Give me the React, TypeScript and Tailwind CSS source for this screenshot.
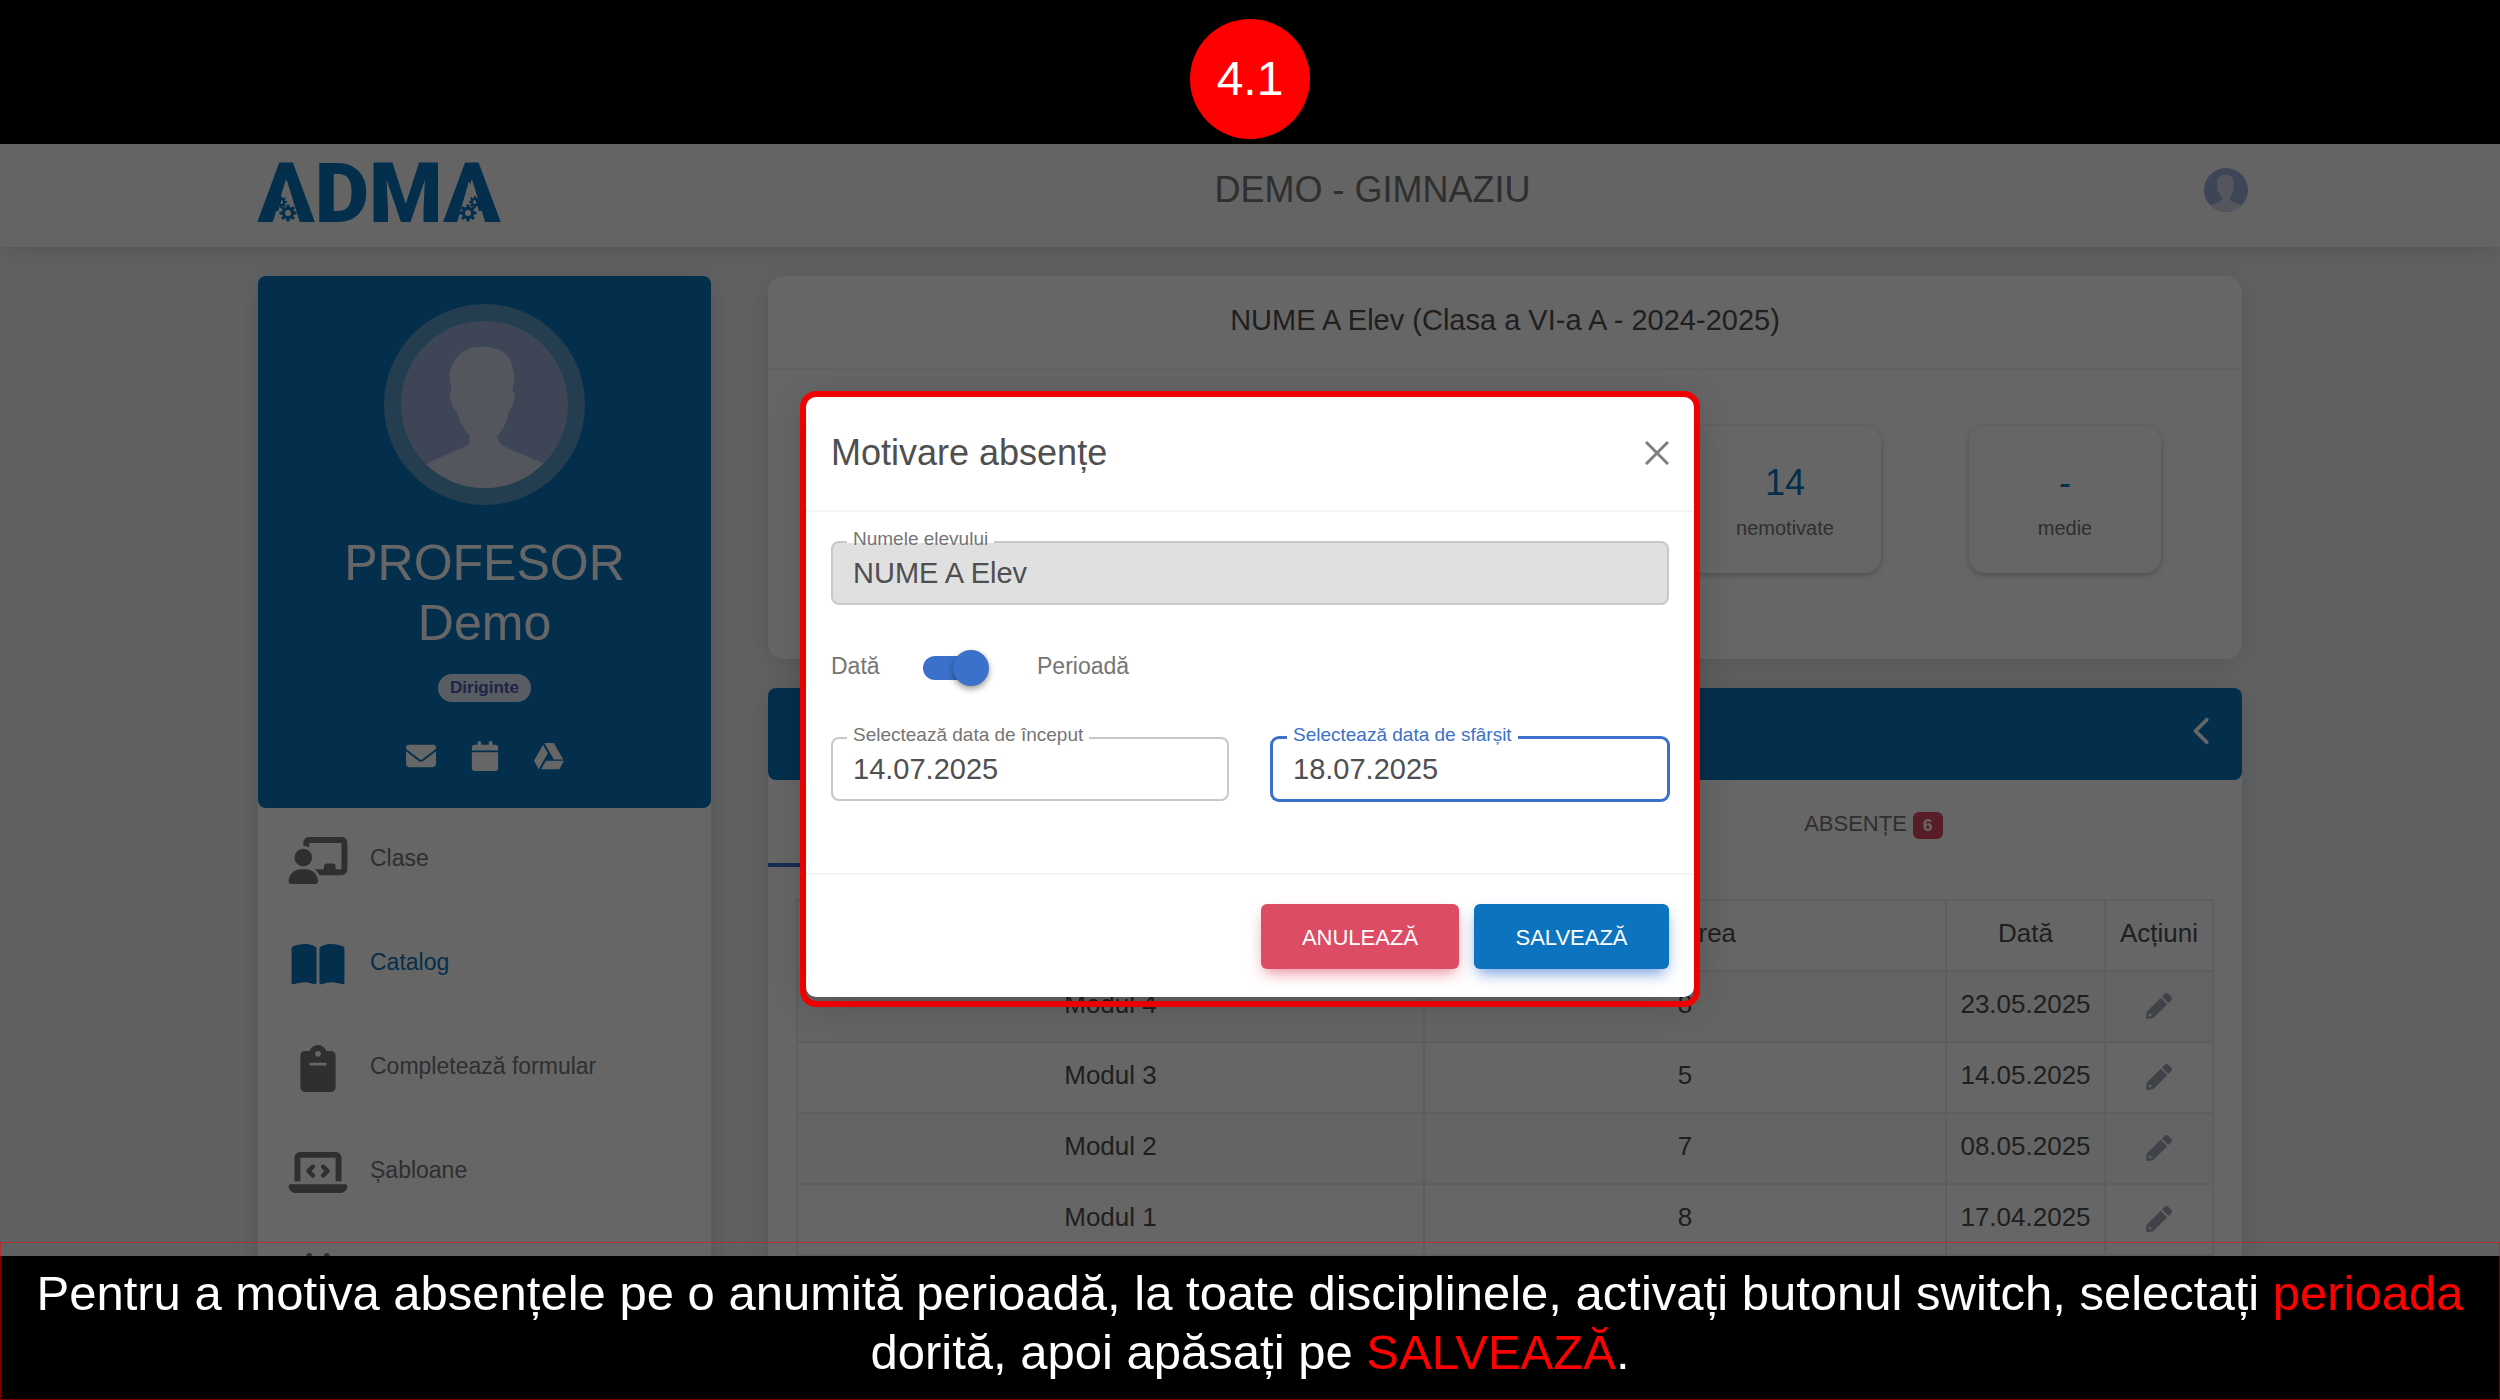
import React, { useState } from 'react';
import clsx from 'clsx';
import {
  FaBookOpen,
  FaCalendar,
  FaCalendarDays,
  FaChalkboardUser,
  FaChevronLeft,
  FaEnvelope,
  FaGoogleDrive,
  FaLaptopCode,
} from 'react-icons/fa6';

interface IconProps {
  className?: string;
}

const ClipboardIcon: React.FC<IconProps> = ({ className = '' }) => (
  <svg className={className} viewBox="0 0 384 512" fill="currentColor">
    <path d="M336 64h-53.9C268.9 26.8 233.7 0 192 0S115.1 26.8 101.9 64H48C21.5 64 0 85.5 0 112v352c0 26.5 21.5 48 48 48h288c26.5 0 48-21.5 48-48V112c0-26.5-21.5-48-48-48zM192 64c17.7 0 32 14.3 32 32s-14.3 32-32 32-32-14.3-32-32 14.3-32 32-32zm80 160H112c-8.8 0-16-7.2-16-16s7.2-16 16-16h160c8.8 0 16 7.2 16 16s-7.2 16-16 16z" />
  </svg>
);

const PencilIcon: React.FC<IconProps> = ({ className = '' }) => (
  <svg
    className={className}
    viewBox="0 0 512 512"
    fill="currentColor"
    fillRule="evenodd"
  >
    <path d="M290.7 93.2l128 128-278 278-114.1 12.6c-15.3 1.7-28.2-11.2-26.5-26.5l12.7-114.2 277.9-277.9zM62 392l58 58-68 12z" />
    <path d="M497.9 74.2l-60.1-60.1c-18.8-18.8-49.2-18.8-67.9 0l-56.5 56.5 128 128 56.5-56.5c18.8-18.8 18.8-49.2 0-67.9z" />
  </svg>
);

const menuItems = [
  { id: 'clase', label: 'Clase', icon: FaChalkboardUser, active: false },
  { id: 'catalog', label: 'Catalog', icon: FaBookOpen, active: true },
  {
    id: 'formular',
    label: 'Completează formular',
    icon: ClipboardIcon,
    active: false,
  },
  { id: 'sabloane', label: 'Șabloane', icon: FaLaptopCode, active: false },
  { id: 'orar', label: '', icon: FaCalendarDays, active: false },
];

const grades = [
  { module: 'Modul 4', value: '8', date: '23.05.2025' },
  { module: 'Modul 3', value: '5', date: '14.05.2025' },
  { module: 'Modul 2', value: '7', date: '08.05.2025' },
  { module: 'Modul 1', value: '8', date: '17.04.2025' },
];

const gearTeeth = [0, 45, 90, 135, 180, 225, 270, 315];

interface GearProps {
  x: number;
  y: number;
  size: number;
}

const Gear: React.FC<GearProps> = ({ x, y, size }) => (
  <g transform={`translate(${x} ${y}) scale(${size})`}>
    {gearTeeth.map((angle) => (
      <rect
        key={angle}
        x="-1.5"
        y="-8.5"
        width="3"
        height="4"
        transform={`rotate(${angle})`}
        fill="#0b75bd"
      />
    ))}
    <circle r="4.6" fill="none" stroke="#0b75bd" strokeWidth="3.2" />
  </g>
);

const Logo: React.FC = () => (
  <svg
    className="overflow-visible"
    width="240"
    height="70"
    viewBox="0 0 240 70"
    role="img"
    aria-label="ADMA"
  >
    <text
      x="121"
      y="67"
      textAnchor="middle"
      fontFamily="Roboto, sans-serif"
      fontWeight="900"
      fontSize="84"
      fill="#0b75bd"
    >
      ADMA
    </text>
    <path d="M29 26 L42 68 H17 Z" fill="#fafafa" />
    <path d="M211 26 L225 68 H199 Z" fill="#fafafa" />
    <Gear x={30} y={58} size={1} />
    <Gear x={23} y={47} size={0.7} />
    <Gear x={210} y={58} size={1} />
    <Gear x={217} y={47} size={0.7} />
  </svg>
);

const Avatar: React.FC<IconProps> = ({ className = '' }) => (
  <svg className={className} viewBox="0 0 168 168" aria-hidden="true">
    <defs>
      <clipPath id="avatar-clip">
        <circle cx="84" cy="84" r="84" />
      </clipPath>
    </defs>
    <g clipPath="url(#avatar-clip)">
      <rect width="168" height="168" fill="#98add8" />
      <path
        d="M80 26 C70 26 62 30 57 36 C53 40 49 48 49 55 L51 70 L49 74 C50 82 53 88 56 91 C59 101 63 109 69 115 V120 Q69 124 65 126 L20 146 V168 H150 V146 L103 126 Q97 122 97 115 C103 109 107 101 108 92 C112 87 114 80 115 73 L112 71 L114 57 C114 49 111 44 110 38 C105 33 101 28 94 28 C89 26 85 26 80 26 Z"
        fill="#d0d8e8"
      />
    </g>
  </svg>
);

interface FieldProps {
  id: string;
  label: string;
  value: string;
  focused?: boolean;
  disabled?: boolean;
}

const Field: React.FC<FieldProps> = ({ id, label, value, focused, disabled }) => (
  <div className="relative">
    <input
      id={id}
      type="text"
      defaultValue={value}
      disabled={disabled}
      className={clsx(
        'block h-16 w-full rounded-lg border-2 px-5 text-[29px] text-[#4f4f4f] outline-none',
        disabled ? 'bg-[#e0e0e0]' : 'bg-white',
        focused ? 'border-[#3b71ca] ring-1 ring-[#3b71ca]' : 'border-[#c8c8c8]'
      )}
    />
    <label
      htmlFor={id}
      className={clsx(
        'absolute -top-3.5 left-4 isolate px-1.5 text-[19px] leading-6 before:absolute before:inset-x-0 before:top-[13px] before:-z-10 before:h-[3px] before:bg-white',
        focused ? 'text-[#3b71ca]' : 'text-[#757575]'
      )}
    >
      {label}
    </label>
  </div>
);

const Header: React.FC = () => (
  <header className="relative grid h-[103px] grid-cols-[285px_1fr_40px] items-center bg-[#fafafa] px-[258px] pb-3 shadow-[0_4px_24px_rgba(0,0,0,0.12)]">
    <a href="#home">
      <Logo />
    </a>
    <h1 className="text-center text-4xl text-[#757575]">DEMO - GIMNAZIU</h1>
    <button type="button" aria-label="Cont" className="-mr-1.5 justify-self-end">
      <Avatar className="size-11" />
    </button>
  </header>
);

const Sidebar: React.FC = () => (
  <aside className="w-[453px] shrink-0 self-start rounded-lg bg-white shadow-[0_4px_28px_rgba(0,0,0,0.12)]">
    <div className="flex flex-col items-center rounded-lg bg-[#0b75bd] pt-7 pb-[37px] text-white">
      <div className="rounded-full bg-[#5a9bc9] p-[17px]">
        <Avatar className="size-[167px]" />
      </div>
      <h2 className="mt-7 text-center text-[50px] leading-[60px]">
        PROFESOR
        <br />
        Demo
      </h2>
      <span className="mt-[21px] rounded-full bg-[#dfe7f6] px-3 text-[17px] leading-7 font-bold text-[#465db4]">
        Diriginte
      </span>
      <div className="mt-[39px] flex items-center justify-center gap-[34px] text-[30px]">
        <a href="#mail" aria-label="E-mail">
          <FaEnvelope />
        </a>
        <a href="#calendar" aria-label="Calendar">
          <FaCalendar />
        </a>
        <a href="#drive" aria-label="Drive">
          <FaGoogleDrive />
        </a>
      </div>
    </div>
    <nav>
      {menuItems.map(({ id, label, icon: Icon, active }) => (
        <a
          key={id}
          href={`#${id}`}
          className={clsx(
            'flex h-[104px] items-center gap-[22px] pl-[30px] text-[23px]',
            active ? 'text-[#0b75bd]' : 'text-[#757575]'
          )}
        >
          <Icon className="h-[47px] w-[60px]" />
          <span className="pb-1">{label}</span>
        </a>
      ))}
    </nav>
  </aside>
);

interface StatProps {
  value: string;
  label: string;
}

const Stat: React.FC<StatProps> = ({ value, label }) => (
  <div className="mx-11 h-[147px] rounded-2xl bg-white pt-[37px] text-center shadow-[0_2px_6px_rgba(0,0,0,0.25)]">
    <p className="text-4xl text-[#0b75bd]">{value}</p>
    <p className="mt-[11px] text-xl leading-7 text-[#757575]">{label}</p>
  </div>
);

const StudentCard: React.FC = () => (
  <section className="rounded-2xl bg-white pb-[86px] shadow-[0_4px_28px_rgba(0,0,0,0.12)]">
    <h2 className="border-b-2 border-[#f4f4f4] pt-[22px] pb-[26px] text-center text-[29px] leading-[44px] text-[#4f4f4f]">
      NUME A Elev (Clasa a VI-a A - 2024-2025)
    </h2>
    <div className="grid grid-cols-5 px-[37px] pt-14">
      <div className="col-start-4">
        <Stat value="14" label="nemotivate" />
      </div>
      <Stat value="-" label="medie" />
    </div>
  </section>
);

const GradesCard: React.FC = () => (
  <section className="rounded-lg bg-white pb-7 shadow-[0_4px_28px_rgba(0,0,0,0.12)]">
    <div className="flex h-[92px] items-center justify-end rounded-lg bg-[#0b75bd] pr-6 text-white">
      <button type="button" aria-label="Înapoi" className="pb-1.5">
        <FaChevronLeft className="size-[30px]" />
      </button>
    </div>
    <div className="grid h-[87px] grid-cols-2">
      <button
        type="button"
        aria-label="Note"
        className="border-b-4 border-[#3b71ca]"
      />
      <button
        type="button"
        className="flex items-center justify-center gap-1.5 text-[22px] text-[#757575]"
      >
        ABSENȚE
        <span className="mt-1 w-[30px] rounded-md bg-[#dc4c64] text-[17px] leading-[27px] font-bold text-white">
          6
        </span>
      </button>
    </div>
    <div className="px-7 pt-8">
      <table className="w-full table-fixed border-collapse text-center text-[26px] text-[#4f4f4f]">
        <colgroup>
          <col className="w-[627px]" />
          <col />
          <col className="w-[159px]" />
          <col className="w-[108px]" />
        </colgroup>
        <thead>
          <tr className="h-[71px]">
            {['Modul', 'Valoarea', 'Dată', 'Acțiuni'].map((title) => (
              <th
                key={title}
                className="border-2 border-[#ebebeb] pb-1 font-normal"
              >
                {title}
              </th>
            ))}
          </tr>
        </thead>
        <tbody>
          {grades.map((grade) => (
            <tr key={grade.module} className="h-[71px] odd:bg-[#fafafa]">
              <td className="border-2 border-[#ebebeb] pb-1">{grade.module}</td>
              <td className="border-2 border-[#ebebeb] pb-1">{grade.value}</td>
              <td className="border-2 border-[#ebebeb] pb-1">{grade.date}</td>
              <td className="border-2 border-[#ebebeb] pb-1">
                <button
                  type="button"
                  aria-label={`Editează ${grade.module}`}
                  className="align-middle text-[#9fa6b2]"
                >
                  <PencilIcon className="size-[26px]" />
                </button>
              </td>
            </tr>
          ))}
        </tbody>
      </table>
    </div>
  </section>
);

const AbsenceModal: React.FC = () => {
  const [isPeriod, setIsPeriod] = useState(true);

  return (
    <div className="absolute inset-0 bg-black/60 pt-[247px]">
      <div className="mx-auto w-[900px] rounded-2xl border-[6px] border-[#ff0000] pb-1">
        <div
          role="dialog"
          aria-labelledby="modal-title"
          className="rounded-[10px] bg-white shadow-[0_4px_40px_rgba(0,0,0,0.2)]"
        >
          <div className="flex h-[115px] items-center justify-between border-b-2 border-[#f4f4f4] px-[25px] pb-0.5">
            <h2 id="modal-title" className="text-4xl text-[#4f4f4f]">
              Motivare absențe
            </h2>
            <button type="button" aria-label="Închide">
              <svg className="size-6" viewBox="0 0 24 24" fill="none">
                <path
                  d="M1 1 L23 23 M23 1 L1 23"
                  stroke="#7f7f7f"
                  strokeWidth="3"
                />
              </svg>
            </button>
          </div>
          <div className="px-[25px] pt-[29px] pb-[72px]">
            <Field
              id="student"
              label="Numele elevului"
              value="NUME A Elev"
              disabled
            />
            <div className="mt-[45px] flex h-9 items-center text-[23px] text-[#757575]">
              <span className="w-[92px] pb-1">Dată</span>
              <label className="relative flex h-9 w-[68px] cursor-pointer items-center">
                <input
                  type="checkbox"
                  aria-label="Perioadă"
                  checked={isPeriod}
                  onChange={(e) => setIsPeriod(e.target.checked)}
                  className="peer h-6 w-[62px] appearance-none rounded-full bg-[#bdbdbd] checked:bg-[#3b71ca]"
                />
                <span className="absolute left-0 size-9 rounded-full bg-white shadow-[0_3px_6px_rgba(0,0,0,0.4)] peer-checked:left-[30px] peer-checked:bg-[#3b71ca]" />
              </label>
              <span className="pb-1 pl-[46px]">Perioadă</span>
            </div>
            <div className="mt-[51px] grid grid-cols-2 gap-[42px]">
              <Field
                id="start-date"
                label="Selectează data de început"
                value="14.07.2025"
              />
              <Field
                id="end-date"
                label="Selectează data de sfârșit"
                value="18.07.2025"
                focused
              />
            </div>
          </div>
          <div className="flex justify-end gap-[15px] border-t-2 border-[#f4f4f4] px-[25px] pt-[29px] pb-7 text-[22px] text-white">
            <button
              type="button"
              className="h-[65px] w-[198px] rounded-md bg-[#dc4c64] pt-0.5 shadow-[0_7px_16px_-4px_rgba(220,76,100,0.7)]"
            >
              ANULEAZĂ
            </button>
            <button
              type="button"
              className="h-[65px] w-[195px] rounded-md bg-[#0c74bf] pt-0.5 shadow-[0_7px_16px_-4px_rgba(59,113,202,0.8)]"
            >
              SALVEAZĂ
            </button>
          </div>
        </div>
      </div>
    </div>
  );
};

const App: React.FC = () => (
  <div className="flex h-screen flex-col bg-black font-['Liberation_Sans',Arial,sans-serif]">
    <div className="flex h-36 shrink-0 items-center justify-center pt-3.5">
      <div className="flex size-[120px] items-center justify-center rounded-full bg-[#ff0000] text-5xl text-white">
        4.1
      </div>
    </div>

    <div className="relative min-h-0 flex-1 overflow-hidden bg-[#f0f2f6]">
      <Header />
      <div className="flex gap-[57px] px-[258px] pt-[29px]">
        <Sidebar />
        <main className="flex min-w-0 flex-1 flex-col gap-[29px]">
          <StudentCard />
          <GradesCard />
        </main>
      </div>
      <AbsenceModal />
    </div>

    <footer className="relative h-36 shrink-0 bg-black px-4 pt-2 text-center text-[49px] leading-[59px] text-white">
      <div className="absolute inset-x-0 -top-3.5 bottom-0 border border-[#ff0000]/50" />
      Pentru a motiva absențele pe o anumită perioadă, la toate disciplinele,
      activați butonul switch, selectați{' '}
      <span className="text-[#ff0000]">perioada</span> dorită, apoi apăsați pe{' '}
      <span className="text-[#ff0000]">SALVEAZĂ</span>.
    </footer>
  </div>
);

export default App;
